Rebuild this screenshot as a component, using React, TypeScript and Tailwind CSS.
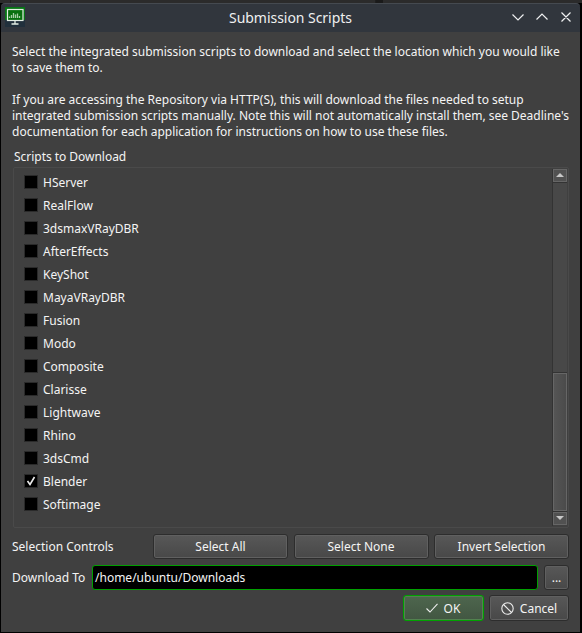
import React from 'react';

const scripts = [
  'HServer', 'RealFlow', '3dsmaxVRayDBR', 'AfterEffects', 'KeyShot', 'MayaVRayDBR', 'Fusion', 'Modo',
  'Composite', 'Clarisse', 'Lightwave', 'Rhino', '3dsCmd', 'Blender', 'Softimage',
];

const face =
  'flex items-center justify-center rounded-[3px] border border-[#2d2d2d] bg-gradient-to-b from-[#585858] to-[#484848] shadow-[inset_0_0_0_1px_#606060]';

function Arrow({ down = false }: { down?: boolean }) {
  return (
    <svg width="8" height="4" viewBox="0 0 8 4" fill="#c8c8c8" className={down ? 'mb-[2px] rotate-180' : 'mb-px'}>
      <path d="M4 0L8 4H0Z" />
    </svg>
  );
}

function TitleBar() {
  return (
    <header className="flex h-[29px] shrink-0 items-center rounded-t-[4px] border-t border-[#454a50] bg-[#31363d] pl-1 pr-2 text-[#eff0f1]">
      <svg width="20" height="20" viewBox="0 0 20 20" className="-mt-[2px]">
        <rect width="20" height="20" fill="#21303c" />
        <rect width="20" height="13" fill="#087516" />
        <rect x="2.500" y="2.500" width="15.500" height="11" fill="#08700f" stroke="#e4eee4" strokeWidth="1.200" />
        <path d="M4.500 11V9.500M6.500 11V8M8.500 11V6M10.500 11V7.500M12.500 11V6.500M14.500 11V9" stroke="#a8cea8" strokeWidth="1.300" />
        <path d="M10 14V17M6.500 17H13.500" stroke="#e4eee4" strokeWidth="1.300" />
      </svg>
      <h1 className="ml-[44px] flex-1 text-center text-[14px] leading-[20px] tracking-[-0.04px]">Submission Scripts</h1>
      <svg width="60" height="12" viewBox="0 0 60 12" fill="none" stroke="#eff0f1" strokeWidth="1.200" className="-mt-[2px]">
        <path d="M.5 3.500L6 9L11.500 3.500M24.500 8.500L30 3L35.500 8.500M49.500 1.500L58.500 10.500M58.500 1.500L49.500 10.500" />
      </svg>
    </header>
  );
}

function ScriptList() {
  return (
    <section className="ml-3 mr-[11px] mt-[2px] flex h-[361px] rounded-[2px] border border-[#4a4a4a]">
      <ul className="flex-1 pl-[10px] pt-[3px]">
        {scripts.map((name) => (
          <li key={name} className="flex h-[23px] items-center">
            <span className="mb-px flex h-[14px] w-[14px] items-center justify-center border border-[#2a2a2a] bg-black">
              {name === 'Blender' && (
                <svg width="10" height="10" viewBox="0 0 10 10" fill="none" stroke="#ececec" strokeWidth="1.600">
                  <path d="M1.500 5L4 8.500L8.500 1" />
                </svg>
              )}
            </span>
            <span className="ml-[5px]">{name}</span>
          </li>
        ))}
      </ul>
      <div className="mb-px mr-px mt-px flex w-[15px] flex-col border-l border-[#333] bg-[#484848]">
        <div className="flex h-[13px] items-center justify-center border border-[#666] bg-[#515151]"><Arrow /></div>
        <div className="flex-1 border-y border-[#333]" />
        <div className="h-[138px] border border-[#666] bg-gradient-to-r from-[#555] to-[#4b4b4b]" />
        <div className="h-px bg-[#333]" />
        <div className="flex h-[13px] items-center justify-center border border-[#666] bg-[#515151]"><Arrow down /></div>
        <div className="h-px bg-[#404040]" />
      </div>
    </section>
  );
}

export default function App() {
  return (
    <div className="flex h-[633px] w-[582px] flex-col bg-black pb-px pl-px pr-[2px] font-['Noto_Sans',sans-serif] text-[12px] leading-[16px] text-[#f4f4f4]">
      <div className="-ml-px -mr-[2px] flex h-[3px] shrink-0 bg-[#2b2b2b]">
        <div className="ml-[10px] w-[366px] border-x border-[#1e1e1e]" />
        <div className="w-[7px] bg-[#1a1a1a]" />
      </div>
      <TitleBar />
      <main className="flex flex-1 flex-col bg-[#404040]">
        <div className="ml-[11px] mt-3 whitespace-nowrap tracking-[-0.005px]">
          <p>Select the integrated submission scripts to download and select the location which you would like</p>
          <p>to save them to.</p>
          <p className="mt-4">If you are accessing the Repository via HTTP(S), this will download the files needed to setup</p>
          <p>integrated submission scripts manually. Note this will not automatically install them, see Deadline's</p>
          <p>documentation for each application for instructions on how to use these files.</p>
        </div>
        <h2 className="ml-[13px] mt-[9px] tracking-[-0.03px]">Scripts to Download</h2>
        <ScriptList />
        <div className="ml-[11px] mr-[11px] mt-[6px] flex h-[25px] items-center">
          <span className="w-[141px]">Selection Controls</span>
          <div className="grid flex-1 grid-cols-[135px_135px_135px] justify-between">
            {['Select All', 'Select None', 'Invert Selection'].map((label) => (
              <button key={label} className={`${face} h-[25px]`}>{label}</button>
            ))}
          </div>
        </div>
        <div className="ml-[11px] mr-[11px] mt-[6px] flex h-[25px] items-center">
          <label className="w-[80px]">Download To</label>
          <div className="flex h-[25px] w-[446px] items-center rounded-[3px] border border-[#00a000] bg-black pl-[2px]">/home/ubuntu/Downloads</div>
          <button className={`${face} ml-[6px] h-[25px] flex-1`}>...</button>
        </div>
        <div className="mr-[11px] mt-[5px] flex h-[26px] justify-end gap-[5px]">
          <button className="flex h-[26px] w-[81px] items-center justify-center gap-[6px] rounded-[3px] border border-[#00a000] bg-gradient-to-b from-[#4e664e] to-[#425642] pr-px pt-px shadow-[inset_0_0_0_1px_#52824f]">
            <svg width="12" height="10" viewBox="0 0 12 10" fill="none" stroke="#eeeeee" strokeWidth="1.100" className="mb-px"><path d="M.5 5.500L4 9L11.500 .8" /></svg>
            OK
          </button>
          <button className={`${face} h-[26px] w-[80px] gap-[6px] pt-px`}>
            <svg width="13" height="13" viewBox="0 0 13 13" fill="none" stroke="#eeeeee" strokeWidth="1.100" className="mb-px"><circle cx="6.500" cy="6.500" r="5.700" /><path d="M2.500 2.500L10.500 10.500" /></svg>
            Cancel
          </button>
        </div>
      </main>
    </div>
  );
}
